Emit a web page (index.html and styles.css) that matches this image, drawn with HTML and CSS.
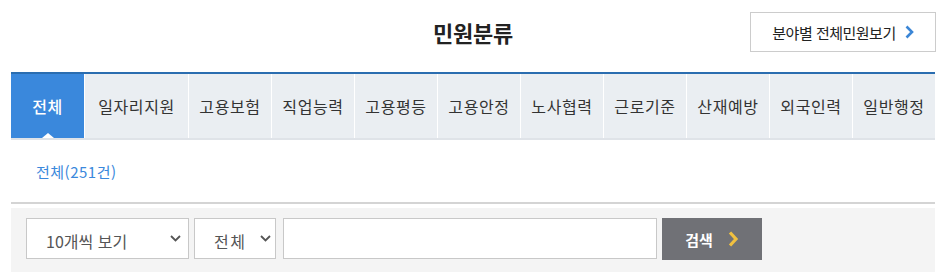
FILE: index.html
```html
<!DOCTYPE html>
<html lang="ko">
<head>
    <meta charset="UTF-8">
    <title>민원분류</title>
    <link rel="stylesheet" href="styles.css">
</head>
<body>
    <div class="container">
        <header class="top">
            <h1>민원분류</h1>
            <a class="all-button" href="#">분야별 전체민원보기
                <svg width="9" height="14" viewBox="0 0 9 14"><path d="M1.5 1.5 L7 7 L1.5 12.5" fill="none" stroke="#3b86d6" stroke-width="2.6"/></svg>
            </a>
        </header>

        <nav class="tabs">
            <a class="tab active" href="#">전체</a>
            <a class="tab wide" href="#">일자리지원</a>
            <a class="tab" href="#">고용보험</a>
            <a class="tab" href="#">직업능력</a>
            <a class="tab" href="#">고용평등</a>
            <a class="tab" href="#">고용안정</a>
            <a class="tab" href="#">노사협력</a>
            <a class="tab" href="#">근로기준</a>
            <a class="tab" href="#">산재예방</a>
            <a class="tab" href="#">외국인력</a>
            <a class="tab" href="#">일반행정</a>
        </nav>

        <p class="count">전체(251건)</p>

        <div class="search-box">
            <div class="select per-page">
                <span>10개씩 보기</span>
                <svg width="11" height="7" viewBox="0 0 11 7"><path d="M1 1 L5.5 5.5 L10 1" fill="none" stroke="#555" stroke-width="1.8"/></svg>
            </div>
            <div class="select field">
                <span>전체</span>
                <svg width="11" height="7" viewBox="0 0 11 7"><path d="M1 1 L5.5 5.5 L10 1" fill="none" stroke="#555" stroke-width="1.8"/></svg>
            </div>
            <input type="text" class="keyword">
            <button class="search-button">검색
                <svg width="11" height="16" viewBox="0 0 11 16"><path d="M2 1.5 L8 8 L2 14.5" fill="none" stroke="#f0c040" stroke-width="3.2"/></svg>
            </button>
        </div>
    </div>
</body>
</html>
```

FILE: styles.css
```css
body {
    margin: 0;
    background-color: #fff;
    font-family: "Noto Sans CJK KR", "Noto Sans", sans-serif;
    color: #222;
}

.container {
    width: 924px;
    margin-left: 11px;
}

.top {
    height: 72px;
    position: relative;
    display: flex;
    justify-content: center;
    align-items: center;
}

h1 {
    margin: 0;
    font-size: 22px;
    font-weight: 700;
    color: #222;
    letter-spacing: -0.3px;
    padding-bottom: 8px;
}

.all-button {
    position: absolute;
    top: 12px;
    right: -1px;
    width: 184px;
    height: 38px;
    border: 1px solid #ccc;
    display: flex;
    align-items: center;
    justify-content: center;
    gap: 9px;
    font-size: 15px;
    letter-spacing: -0.5px;
    color: #222;
    text-decoration: none;
}

.tabs {
    display: flex;
    gap: 1px;
    border-top: 2px solid #2a6db0;
    border-bottom: 2px solid #dfe3e8;
}

.tab {
    width: 82px;
    height: 64px;
    display: flex;
    align-items: center;
    justify-content: center;
    background-color: #eaeef2;
    font-size: 16px;
    letter-spacing: 0.6px;
    color: #333;
    text-decoration: none;
    position: relative;
}

.tab.wide {
    width: 103px;
}

.tab.active {
    width: 73px;
    background-color: #3a88dc;
    color: #fff;
    font-weight: 500;
}

.tab.active::after {
    content: "";
    position: absolute;
    bottom: 0;
    left: 50%;
    margin-left: -6px;
    border-left: 6px solid transparent;
    border-right: 6px solid transparent;
    border-bottom: 5px solid #fff;
}

.count {
    margin: 0;
    height: 62px;
    padding-left: 25px;
    display: flex;
    align-items: center;
    font-size: 15px;
    letter-spacing: 0.5px;
    color: #3a88dc;
    border-bottom: 2px solid #d4d4d4;
}

.search-box {
    margin-top: 4px;
    height: 64px;
    background-color: #f4f4f4;
    display: flex;
    align-items: flex-start;
    padding: 10px 0 0 15px;
    box-sizing: border-box;
    gap: 5px;
}

.select {
    height: 41px;
    box-sizing: border-box;
    border: 1px solid #c8c8c8;
    background-color: #fff;
    display: flex;
    align-items: center;
    justify-content: space-between;
    font-size: 16px;
    color: #555;
}

.per-page {
    width: 163px;
    padding: 0 7px 0 19px;
}

.field {
    width: 82px;
    padding: 0 4px 0 19px;
    letter-spacing: 1.5px;
}

.select span {
    padding-top: 4px;
}

.keyword {
    width: 374px;
    height: 41px;
    box-sizing: border-box;
    border: 1px solid #c8c8c8;
    margin: 0 0 0 2px;
    background-color: #fff;
}

.search-button {
    width: 100px;
    height: 42px;
    border: none;
    background-color: #707176;
    color: #fff;
    font-family: "Noto Sans CJK KR", sans-serif;
    font-size: 15px;
    font-weight: 700;
    display: flex;
    align-items: center;
    justify-content: center;
    gap: 15px;
    padding: 0;
}
```
